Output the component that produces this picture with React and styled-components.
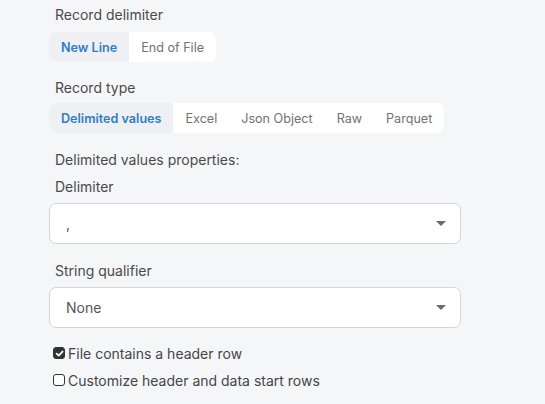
import React, { useState } from 'react'
import styled, { createGlobalStyle } from 'styled-components'

const GlobalStyle = createGlobalStyle`
  html, body {
    margin: 0;
    padding: 0;
    background: #f5f6f8;
  }
  body {
    font-family: 'Inter', 'Liberation Sans', sans-serif;
    color: #454545;
  }
`

const Page = styled.div`
  width: 545px;
  height: 404px;
  box-sizing: border-box;
  padding: 5px 84px 0 49px;
  display: flex;
  flex-direction: column;
  overflow: hidden;
`

const Field = styled.div`
  display: flex;
  flex-direction: column;
  align-items: flex-start;
  margin-bottom: ${p => p.gap || 16}px;
`

const Label = styled.div`
  font-size: 14px;
  line-height: 20px;
  color: #4a4a4a;
  padding-left: 6px;
  margin-bottom: ${p => p.mb ?? 6}px;
`

const Segmented = styled.div`
  display: inline-flex;
  background: #ffffff;
  border-radius: 8px;
  overflow: hidden;
  height: 30px;
`

const Segment = styled.button`
  border: none;
  margin: 0;
  padding: 0 12px;
  font-family: inherit;
  font-size: 12.6px;
  font-weight: ${p => (p.active ? 600 : 400)};
  color: ${p => (p.active ? '#2f7dc8' : '#727272')};
  background: ${p => (p.active ? '#eef0f3' : '#ffffff')};
  cursor: pointer;
  white-space: nowrap;
`

const SelectBox = styled.div`
  width: 412px;
  height: 41px;
  box-sizing: border-box;
  background: #ffffff;
  border: 1px solid #d3d5d8;
  border-radius: 7px;
  display: flex;
  align-items: center;
  justify-content: space-between;
  padding: 0 14px 0 16px;
  font-size: 14px;
  color: #555555;
`

const Caret = styled.span`
  width: 0;
  height: 0;
  border-left: 5px solid transparent;
  border-right: 5px solid transparent;
  border-top: 5px solid #6b6b6b;
`

const CheckRow = styled.label`
  display: flex;
  align-items: center;
  gap: 3px;
  height: 20px;
  padding-left: 4px;
  font-size: 14px;
  color: #454545;
  margin-bottom: 7px;
  cursor: pointer;
`

const Box = styled.span`
  width: 12px;
  height: 12px;
  box-sizing: border-box;
  border-radius: 3px;
  border: 1.5px solid #333;
  background: ${p => (p.checked ? '#333' : '#fff')};
  display: flex;
  align-items: center;
  justify-content: center;
`

function Check({ checked }) {
  return (
    <Box checked={checked}>
      {checked && (
        <svg width="9" height="9" viewBox="0 0 10 10">
          <path d="M1.8 5.2 L4.1 7.4 L8.4 2.8" fill="none" stroke="#fff" strokeWidth="2" strokeLinecap="round" strokeLinejoin="round" />
        </svg>
      )}
    </Box>
  )
}

export default function App() {
  const [delim, setDelim] = useState('New Line')
  const [type, setType] = useState('Delimited values')
  const [header, setHeader] = useState(true)
  const [custom, setCustom] = useState(false)

  return (
    <>
      <GlobalStyle />
      <Page>
        <Field>
          <Label mb={7}>Record delimiter</Label>
          <Segmented>
            {['New Line', 'End of File'].map(x => (
              <Segment key={x} active={delim === x} onClick={() => setDelim(x)}>{x}</Segment>
            ))}
          </Segmented>
        </Field>
        <Field gap={17}>
          <Label mb={5}>Record type</Label>
          <Segmented>
            {['Delimited values', 'Excel', 'Json Object', 'Raw', 'Parquet'].map(x => (
              <Segment key={x} active={type === x} onClick={() => setType(x)}>{x}</Segment>
            ))}
          </Segmented>
        </Field>
        <Field gap={17}>
          <Label mb={7}>Delimited values properties:</Label>
          <Label>Delimiter</Label>
          <SelectBox>
            <span>,</span>
            <Caret />
          </SelectBox>
        </Field>
        <Field gap={15}>
          <Label>String qualifier</Label>
          <SelectBox>
            <span>None</span>
            <Caret />
          </SelectBox>
        </Field>
        <CheckRow onClick={() => setHeader(!header)}>
          <Check checked={header} />
          File contains a header row
        </CheckRow>
        <CheckRow onClick={() => setCustom(!custom)}>
          <Check checked={custom} />
          Customize header and data start rows
        </CheckRow>
      </Page>
    </>
  )
}
